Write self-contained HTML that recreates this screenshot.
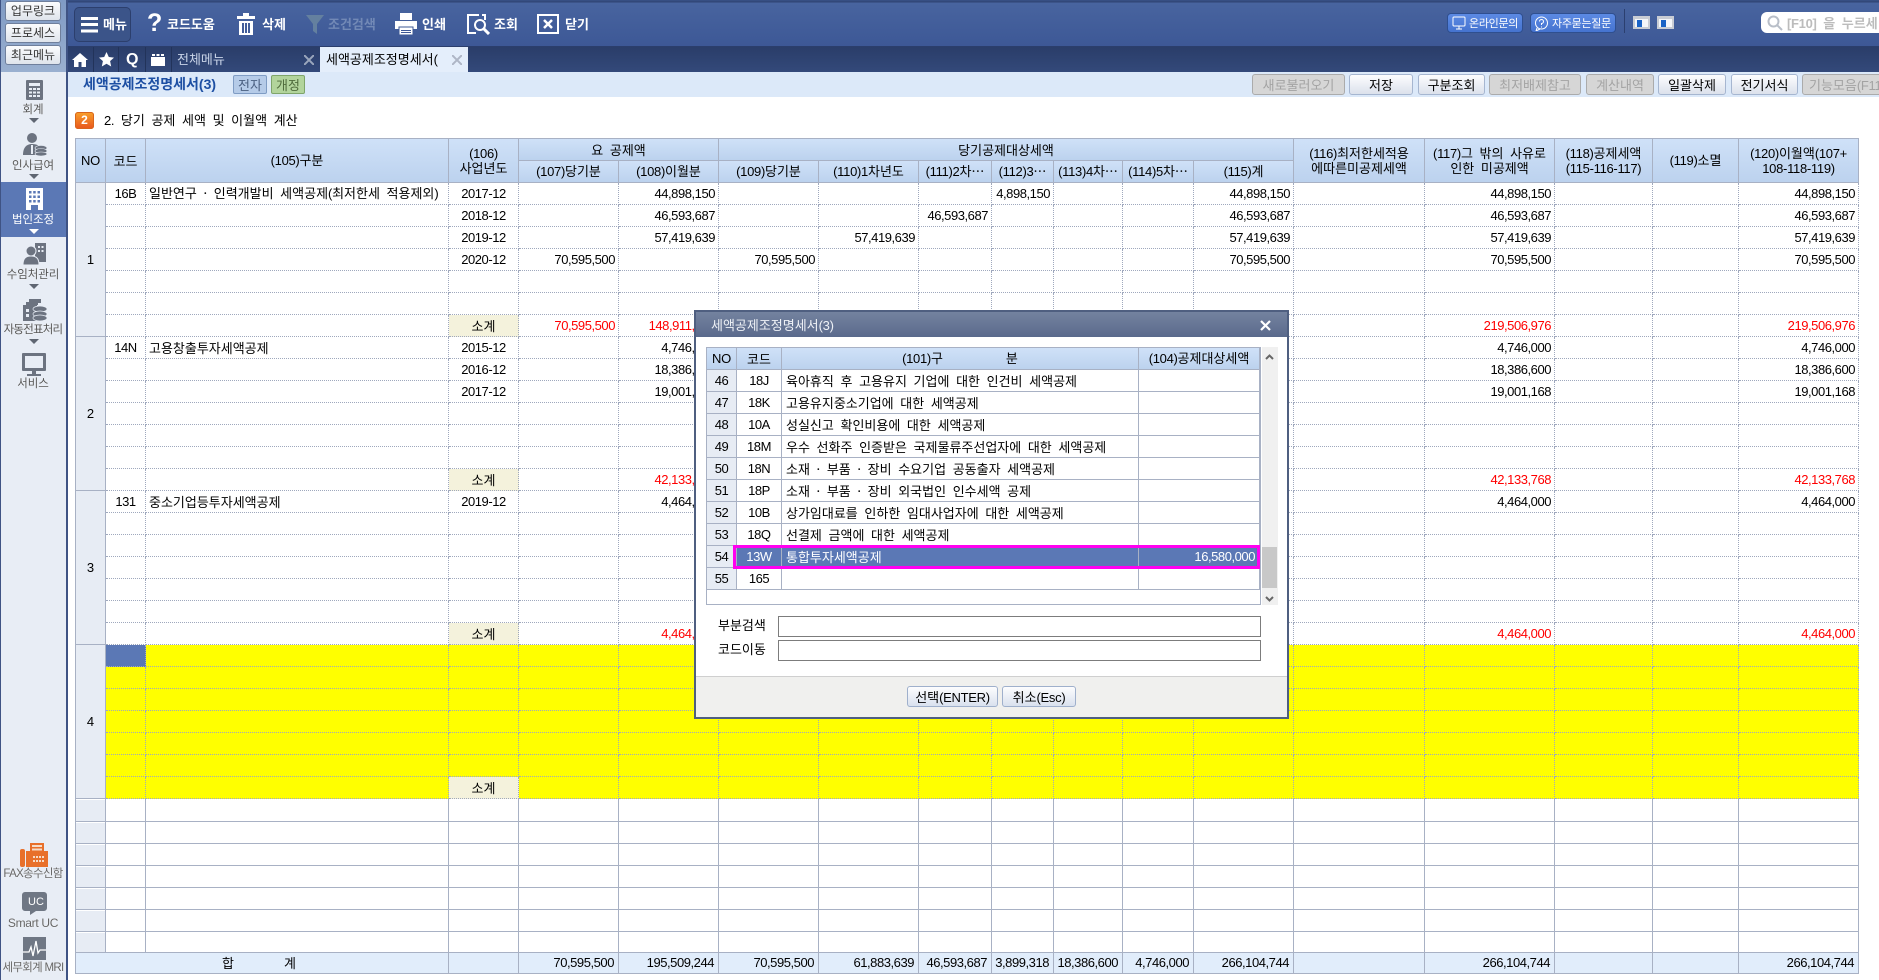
<!DOCTYPE html>
<html lang="ko"><head><meta charset="utf-8"><title>세액공제조정명세서(3)</title>
<style>
html,body{margin:0;padding:0;background:#fff}
body{position:relative;width:1879px;height:980px;overflow:hidden;font:13px/16px "Noto Sans CJK KR","NanumGothic",sans-serif;color:#000;word-spacing:3px}
.a{position:absolute;white-space:nowrap}
svg{position:absolute;display:block}
u{font-family:"Liberation Sans",sans-serif;letter-spacing:-.3px;text-decoration:none;word-spacing:0}
.tb{color:#fff;font-weight:700;top:16px}
.top{left:5px;width:56px;height:20px;box-sizing:border-box;text-align:center;line-height:18px;font-size:12px;background:linear-gradient(#fbfcfe,#dfe4ec);border:1px solid #6f7f9c;border-radius:3px;color:#333}
.sl{left:0;width:66px;text-align:center;font-size:11.500px;color:#555;letter-spacing:-.1px;line-height:14px;text-shadow:0 0 1px #fff}
.ar{width:0;height:0;border-left:5px solid transparent;border-right:5px solid transparent;border-top:5px solid #5f6672;left:29px}
.bt{top:74px;height:21px;box-sizing:border-box;text-align:center;line-height:19px;background:linear-gradient(#fdfdfe,#dbe1ec);border:1px solid #a6b6d0;border-radius:3px}
.off{background:#d6d6d6;border-color:#ababab;color:#a3a3a3}
table{border-collapse:separate;border-spacing:0;table-layout:fixed;position:absolute}
td,th{padding:0;box-sizing:border-box;overflow:hidden;white-space:nowrap;font-weight:400}
#g{left:75px;top:138px;width:1784px}
#g td{border:solid #9fa8bd;border-width:0 1px 1px 0;border-style:none dotted dotted none;line-height:20px;text-align:center}
#g th,#m th{border-right:1px solid #a8b1c4;border-bottom:1px solid #a8b1c4;background:linear-gradient(#cfe1f8,#bcd2ee);line-height:14px}
#g tr.h1 th{border-top:1px solid #a8b1c4}
#g th:first-child{border-left:1px solid #a8b1c4}
#g tr.h2 th:first-child{border-left:0}
#g tr{height:22px}
#g td.r{text-align:right;padding-right:3px;font:13px/20px "Liberation Sans",sans-serif;letter-spacing:-.45px;word-spacing:0}
#g td.c{font:13px/20px "Liberation Sans",sans-serif;letter-spacing:-.45px;word-spacing:0}
#g td.l{text-align:left;padding-left:3px}
#g td.no{background:#e7ecf4;border:solid #a8b1c4;border-width:0 1px 1px 1px;font:13px/20px "Liberation Sans",sans-serif}
#g td.x{color:#f00}
#g td.sub{background:#f4f2dc}
#g .y td{background:#ff0}
#g .y td.sub{background:#f4f2dc}
#g .y td.sel{background:#5b78b5}
#g .s td{border-style:none solid solid none;border-color:#a8b1c4}
#g .s td.no{border-style:solid;border-width:0 1px 1px 1px;box-shadow:inset 0 1px #fff}
#g .t td{background:#e1edfb;border-style:none solid solid none;border-color:#a8b1c4}
#g .t td:first-child{border-left:1px solid #a8b1c4}
#g .t td.r{padding-right:4px}
#d{left:694px;top:310px;width:595px;height:409px;box-sizing:border-box;border:2px solid #4f5f80;background:#fff;z-index:5}
#m{left:706px;top:347px;width:554px;z-index:6}
#m th{border-top:1px solid #a8b1c4}
#m th:first-child{border-left:1px solid #a8b1c4}
#m tr{height:22px}
#m td{border-right:1px solid #a8b1c4;border-bottom:1px solid #a8b1c4;line-height:20px;text-align:center}
#m td:first-child{background:#e7ecf4;border-left:1px solid #a8b1c4}
#m td.c,#m td:first-child{font:13px/20px "Liberation Sans",sans-serif;letter-spacing:-.45px}
#m td.l{text-align:left;padding-left:4px}
#m .se td{background:#5b78b5;color:#fff}
#m .se td:first-child{background:#e7ecf4;color:#000}
#m td.r{text-align:right;padding-right:4px;font:13px/20px "Liberation Sans",sans-serif;letter-spacing:-.45px}
.dbt{top:686px;height:21px;box-sizing:border-box;text-align:center;line-height:19px;background:linear-gradient(#fdfdfe,#d9e1ee);border:1px solid #9fb0cc;border-radius:3px;z-index:7}
.inp{left:778px;width:483px;height:21px;box-sizing:border-box;border:1px solid #7c7c7c;background:#fff;z-index:7}
.gap{display:inline-block}
</style></head><body>

<div class="a" style="left:0;top:0;width:1879px;height:47px;background:linear-gradient(#3a5288 0,#2f4474 2px,#48649f 3px,#3d5896 100%);border-bottom:1px solid #2b3e6c;box-sizing:border-box"></div>
<div class="a" style="left:0;top:47px;width:1879px;height:25px;background:linear-gradient(#2a3d69,#33497a)"></div>

<div class="a" style="left:74px;top:7px;width:57px;height:35px;box-sizing:border-box;background:#3b5489;border:1px solid #2c3f6d;border-radius:5px"></div>
<svg style="left:81px;top:17px" width="17" height="16"><rect width="17" height="3" fill="#fff"/><rect y="6" width="17" height="3" fill="#fff"/><rect y="12.500" width="17" height="3" fill="#fff"/></svg>
<span class="a tb" style="left:103px">메뉴</span>
<span class="a" style="left:147px;top:8px;color:#fff;font:700 25px/30px 'Liberation Sans',sans-serif">?</span>
<span class="a tb" style="left:167px">코드도움</span>
<svg style="left:237px;top:13px" width="18" height="22" fill="#fff"><rect x="6" y="0" width="6" height="3"/><rect x="0" y="3" width="18" height="3"/><path d="M2 8h14v14H2zM5 10v10h2V10zM8 10v10h2V10zM11 10v10h2V10z" fill-rule="evenodd"/></svg>
<span class="a tb" style="left:262px">삭제</span>
<svg style="left:306px;top:15px" width="18" height="19"><path d="M0 0h18L11 9v10l-4-3V9z" fill="#64809f"/></svg>
<span class="a tb" style="left:328px;color:#7289b6">조건검색</span>
<svg style="left:395px;top:13px" width="22" height="22" fill="#fff"><rect x="5" y="0" width="12" height="7"/><rect x="0" y="8" width="22" height="8"/><rect x="4" y="14" width="14" height="8" stroke="#3d5896"/><rect x="6" y="17" width="10" height="1" fill="#3d5896"/><rect x="6" y="19" width="10" height="1" fill="#3d5896"/></svg>
<span class="a tb" style="left:422px">인쇄</span>
<svg style="left:467px;top:14px" width="23" height="21" fill="none" stroke="#fff" stroke-width="2"><path d="M12 1H1v18h8"/><path d="M15 1h3v5" /><circle cx="13" cy="11" r="5"/><path d="M17 15l5 5" stroke-width="3"/></svg>
<span class="a tb" style="left:494px">조회</span>
<svg style="left:537px;top:14px" width="22" height="20" fill="none" stroke="#fff" stroke-width="2"><rect x="1" y="1" width="20" height="18"/><path d="M7 6l8 8M15 6l-8 8" stroke-width="2.500"/></svg>
<span class="a tb" style="left:565px">닫기</span>

<div class="a" style="left:1447px;top:13px;width:76px;height:20px;box-sizing:border-box;background:linear-gradient(#5c8ae4,#4573cf);border:1px solid #2f4f8f;border-radius:4px;color:#fff;font-size:11px;line-height:18px;padding-left:21px;letter-spacing:-.3px">온라인문의</div>
<svg style="left:1452px;top:16px" width="14" height="14" fill="none" stroke="#fff"><rect x="1" y="1" width="12" height="9" rx="1"/><path d="M4 13h6M7 10v3"/></svg>
<div class="a" style="left:1530px;top:13px;width:86px;height:20px;box-sizing:border-box;background:linear-gradient(#5c8ae4,#4573cf);border:1px solid #2f4f8f;border-radius:4px;color:#fff;font-size:11px;line-height:18px;padding-left:21px;letter-spacing:-.3px">자주묻는질문</div>
<svg style="left:1534px;top:16px" width="15" height="15" fill="none" stroke="#fff"><circle cx="7.500" cy="7" r="6"/><path d="M3 12l-1 3 4-2"/><path d="M5.500 5.500a2 2 0 1 1 2 2v1.500M7.500 10.500v1"/></svg>
<div class="a" style="left:1624px;top:9px;width:1px;height:24px;background:#2b3f6f"></div>
<svg style="left:1633px;top:16px" width="17" height="13"><rect width="17" height="13" fill="#c8ccd4"/><rect x="2" y="3" width="13" height="8" fill="#f4f6fa"/><rect x="4" y="4" width="5" height="7" fill="#1a63c6"/></svg>
<svg style="left:1657px;top:16px" width="17" height="13"><rect width="17" height="13" fill="#c8ccd4"/><rect x="2" y="3" width="13" height="8" fill="#f4f6fa"/><rect x="4" y="4" width="5" height="7" fill="#1a63c6"/></svg>
<div class="a" style="left:1761px;top:12px;width:130px;height:21px;background:#fff;border-radius:6px"></div>
<svg style="left:1767px;top:15px" width="16" height="16" fill="none" stroke="#b8bec8" stroke-width="2"><circle cx="6.500" cy="6.500" r="5"/><path d="M10 10l5 5"/></svg>
<span class="a" style="left:1787px;top:15px;color:#bcbcbc;font-weight:700"><u>[F10]</u> 을 누르세</span>

<svg style="left:72px;top:53px" width="16" height="14" fill="#fff"><path d="M8 0l8 7h-2v7H9.500V9h-3v5H2V7H0z"/></svg>
<svg style="left:99px;top:52px" width="15" height="15" fill="#fff"><path d="M7.500 0l2.300 5 5.200.6-3.900 3.500 1.100 5.400-4.700-2.700-4.700 2.700 1.100-5.400L0 5.600 5.200 5z"/></svg>
<span class="a" style="left:126px;top:51px;color:#fff;font:700 16px/18px 'Liberation Sans',sans-serif">Q</span>
<svg style="left:151px;top:54px" width="14" height="12" fill="#fff"><rect y="3" width="14" height="9"/><rect x="1" width="3" height="2"/><rect x="5.500" width="3" height="2"/><rect x="10" width="3" height="2"/></svg>
<div class="a" style="left:93px;top:47px;width:1px;height:25px;background:#22335a"></div>
<div class="a" style="left:118px;top:47px;width:1px;height:25px;background:#22335a"></div>
<div class="a" style="left:145px;top:47px;width:1px;height:25px;background:#22335a"></div>
<div class="a" style="left:171px;top:47px;width:1px;height:25px;background:#22335a"></div>
<span class="a" style="left:177px;top:51px;color:#c9d4e8">전체메뉴</span>
<svg style="left:304px;top:55px" width="10" height="10" stroke="#9aa6bc" stroke-width="2"><path d="M0 0l10 10M10 0L0 10"/></svg>
<div class="a" style="left:320px;top:47px;width:148px;height:25px;background:#e4eefb"></div>
<span class="a" style="left:326px;top:51px;word-spacing:0">세액공제조정명세서<u>(</u></span>
<svg style="left:452px;top:55px" width="10" height="10" stroke="#aeb6c6" stroke-width="2"><path d="M0 0l10 10M10 0L0 10"/></svg>

<div class="a" style="left:68px;top:72px;width:1811px;height:25px;background:#dce9f9"></div>
<span class="a" style="left:83px;top:76px;color:#1d4fa3;font-weight:700;font-size:14px">세액공제조정명세서<u style="letter-spacing:0">(3)</u></span>
<div class="a" style="left:233px;top:75px;width:34px;height:19px;box-sizing:border-box;background:#b5cbe8;border:1px solid #7f9cc4;text-align:center;line-height:17px;color:#4a5f80;border-radius:2px">전자</div>
<div class="a" style="left:271px;top:75px;width:34px;height:19px;box-sizing:border-box;background:#b2d49c;border:1px solid #7fa56a;text-align:center;line-height:17px;color:#4f6b3c;border-radius:2px">개정</div>
<div class="a bt off" style="left:1252px;width:93px">새로불러오기</div>
<div class="a bt" style="left:1349px;width:64px">저장</div>
<div class="a bt" style="left:1418px;width:67px">구분조회</div>
<div class="a bt off" style="left:1489px;width:92px">최저배제참고</div>
<div class="a bt off" style="left:1586px;width:68px">계산내역</div>
<div class="a bt" style="left:1658px;width:68px">일괄삭제</div>
<div class="a bt" style="left:1731px;width:67px">전기서식</div>
<div class="a bt off" style="left:1802px;width:90px;text-align:left;padding-left:6px">기능모음<u>(F11)</u></div>

<div class="a" style="left:0;top:0;width:68px;height:980px;box-sizing:border-box;background:#e8edf5;border-left:1px solid #3f5384;border-right:2px solid #3f5384"></div>
<div class="a" style="left:1px;top:0;width:65px;height:72px;background:linear-gradient(#7f9ac4,#9ab0d0)"></div>
<div class="a top" style="top:1px">업무링크</div>
<div class="a top" style="top:23px">프로세스</div>
<div class="a top" style="top:45px">최근메뉴</div>

<svg style="left:26px;top:80px" width="17" height="20"><rect width="17" height="20" rx="1" fill="#6c7380"/><rect x="3" y="3" width="11" height="3" fill="#e8edf5"/><path d="M3 8h3v2H3zM7 8h3v2H7zM11 8h3v2h-3zM3 11.500h3v2H3zM7 11.500h3v2H7zM11 11.500h3v2h-3zM3 15h3v2H3zM7 15h3v2H7zM11 15h3v2h-3z" fill="#e8edf5"/></svg>
<span class="a sl" style="top:102px">회계</span><div class="a ar" style="top:118px"></div>
<svg style="left:23px;top:133px" width="24" height="23" fill="#6c7380"><circle cx="9" cy="5" r="5"/><path d="M0 22c0-8 4-11 9-11s8 2 9 5v6z"/><ellipse cx="18" cy="15" rx="6" ry="2.500" stroke="#e8edf5" stroke-width=".6"/><ellipse cx="18" cy="18" rx="6" ry="2.500" stroke="#e8edf5" stroke-width=".6"/><ellipse cx="18" cy="21" rx="6" ry="2" stroke="#e8edf5" stroke-width=".6"/><rect x="8" y="12" width="2" height="9" fill="#e8edf5"/></svg>
<span class="a sl" style="top:158px">인사급여</span><div class="a ar" style="top:174px"></div>
<div class="a" style="left:1px;top:182px;width:65px;height:55px;background:#5b78b5"></div>
<svg style="left:26px;top:188px" width="17" height="22"><path d="M0 0h17v22h-5v-5H5v5H0z" fill="#fff"/><path d="M3 3h2.500v2.500H3zM7.200 3h2.500v2.500H7.200zM11.500 3H14v2.500h-2.500zM3 7.500h2.500V10H3zM7.200 7.500h2.500V10H7.200zM11.500 7.500H14V10h-2.500zM3 12h2.500v2.500H3zM7.200 12h2.500v2.500H7.200zM11.500 12H14v2.500h-2.500z" fill="#5b78b5"/></svg>
<span class="a sl" style="top:212px;color:#fff;text-shadow:none">법인조정</span><div class="a ar" style="top:229px;border-top-color:#fff"></div>
<svg style="left:23px;top:243px" width="23" height="22" fill="#6c7380"><rect x="12" y="0" width="11" height="19"/><path d="M15 3h2v2h-2zM18.500 3h2v2h-2zM15 7h2v2h-2zM18.500 7h2v2h-2z" fill="#e8edf5"/><circle cx="8" cy="8" r="5" stroke="#e8edf5"/><path d="M0 22c0-7 3-9 8-9s8 2 8 9z" stroke="#e8edf5"/></svg>
<span class="a sl" style="top:267px">수임처관리</span><div class="a ar" style="top:284px"></div>
<svg style="left:23px;top:299px" width="24" height="22" fill="#6c7380"><path d="M6 0h12v4H6zM3 3h12v3H3z"/><rect x="0" y="6" width="14" height="16"/><path d="M3 10h3v3H3zM3 15h3v3H3z" fill="#e8edf5"/><ellipse cx="17" cy="10" rx="7" ry="3" stroke="#e8edf5" stroke-width=".7"/><ellipse cx="17" cy="15" rx="7" ry="3" stroke="#e8edf5" stroke-width=".7"/><ellipse cx="17" cy="19" rx="7" ry="3" stroke="#e8edf5" stroke-width=".7"/></svg>
<span class="a sl" style="top:322px;letter-spacing:-.8px">자동전표처리</span><div class="a ar" style="top:339px"></div>
<svg style="left:22px;top:353px" width="24" height="23" fill="#6c7380"><path fill-rule="evenodd" d="M1 0h22a1 1 0 0 1 1 1v16a1 1 0 0 1-1 1H1a1 1 0 0 1-1-1V1a1 1 0 0 1 1-1zM3 3v12h18V3z"/><rect x="10" y="18" width="4" height="3"/><rect x="5" y="21" width="14" height="2"/></svg>
<span class="a sl" style="top:376px">서비스</span>

<svg style="left:20px;top:843px" width="28" height="24" fill="#e8702a"><rect x="0" y="6" width="5" height="18" rx="2"/><path d="M6 8h4V0h14v8h4v16H6z"/><path d="M12 2h10v2H12zM12 5.500h10v2H12z" fill="#f6dcc8"/><path d="M13 13h2v2h-2zM16 13h2v2h-2zM19 13h2v2h-2zM22 13h2v2h-2zM13 17h2v2h-2zM16 17h2v2h-2zM19 17h2v2h-2zM22 17h2v2h-2z" fill="#f6dcc8"/></svg>
<span class="a sl" style="top:867px;color:#666;font-family:'Liberation Sans','Noto Sans CJK KR',sans-serif;letter-spacing:-.7px;word-spacing:0">FAX송수신함</span>
<svg style="left:22px;top:892px" width="25" height="23"><path d="M3 0h19a3 3 0 0 1 3 3v13a3 3 0 0 1-3 3h-8l-6 4v-4H3a3 3 0 0 1-3-3V3a3 3 0 0 1 3-3z" fill="#6f7784"/></svg>
<span class="a" style="left:28px;top:895px;color:#fff;font:11px/14px 'Liberation Sans',sans-serif;word-spacing:0">UC</span>
<span class="a sl" style="top:916px;color:#666;font-family:'Liberation Sans',sans-serif;font-size:12px;word-spacing:0;letter-spacing:-.3px">Smart UC</span>
<svg style="left:23px;top:937px" width="23" height="23"><rect width="23" height="23" fill="#6f7784"/><path d="M0 15h6l2-5 2 9 3-15 2 12 2-3h6" fill="none" stroke="#fff" stroke-width="1.300"/></svg>
<span class="a sl" style="top:961px;color:#666;font-family:'Liberation Sans','Noto Sans CJK KR',sans-serif;letter-spacing:-.7px;word-spacing:0">세무회계 MRI</span>

<div class="a" style="left:75px;top:112px;width:19px;height:17px;border-radius:3px;background:linear-gradient(#f9a12a,#e8551e);border:0;color:#fff;font:700 12px/17px 'Liberation Sans',sans-serif;text-align:center;box-shadow:inset 0 0 0 1px #d9651c">2</div>
<span class="a" style="left:104px;top:112px"><u>2.</u> 당기 공제 세액 및 이월액 계산</span>

<table id="g">
<colgroup><col style="width:31px"><col style="width:40px"><col style="width:303px"><col style="width:70px"><col style="width:100px"><col style="width:100px"><col style="width:100px"><col style="width:100px"><col style="width:73px"><col style="width:62px"><col style="width:69px"><col style="width:71px"><col style="width:100px"><col style="width:131px"><col style="width:130px"><col style="width:98px"><col style="width:86px"><col style="width:120px"></colgroup>
<tr class="h1" style="height:23px"><th rowspan="2"><u>NO</u></th><th rowspan="2">코드</th><th rowspan="2"><u>(105)</u>구분</th><th rowspan="2"><u>(106)</u><br>사업년도</th><th colspan="2">요 공제액</th><th colspan="7">당기공제대상세액</th><th rowspan="2"><u>(116)</u>최저한세적용<br>에따른미공제세액</th><th rowspan="2"><u>(117)</u>그 밖의 사유로<br>인한 미공제액</th><th rowspan="2"><u>(118)</u>공제세액<br><u>(115-116-117)</u></th><th rowspan="2"><u>(119)</u>소멸</th><th rowspan="2"><u>(120)</u>이월액<u>(107+</u><br><u>108-118-119)</u></th></tr>
<tr class="h2"><th><u>(107)</u>당기분</th><th><u>(108)</u>이월분</th><th><u>(109)</u>당기분</th><th><u>(110)1</u>차년도</th><th><u>(111)2</u>차…</th><th><u>(112)3</u>…</th><th><u>(113)4</u>차…</th><th><u>(114)5</u>차…</th><th><u>(115)</u>계</th></tr>

<tr><td class="no" rowspan="7">1</td><td class="c">16B</td><td class="l">일반연구 · 인력개발비 세액공제<u>(</u>최저한세 적용제외<u>)</u></td><td class="c">2017-12</td><td></td><td class="r">44,898,150</td><td></td><td></td><td></td><td class="r">4,898,150</td><td></td><td></td><td class="r">44,898,150</td><td></td><td class="r">44,898,150</td><td></td><td></td><td class="r">44,898,150</td></tr>
<tr><td></td><td></td><td class="c">2018-12</td><td></td><td class="r">46,593,687</td><td></td><td></td><td class="r">46,593,687</td><td></td><td></td><td></td><td class="r">46,593,687</td><td></td><td class="r">46,593,687</td><td></td><td></td><td class="r">46,593,687</td></tr>
<tr><td></td><td></td><td class="c">2019-12</td><td></td><td class="r">57,419,639</td><td></td><td class="r">57,419,639</td><td></td><td></td><td></td><td></td><td class="r">57,419,639</td><td></td><td class="r">57,419,639</td><td></td><td></td><td class="r">57,419,639</td></tr>
<tr><td></td><td></td><td class="c">2020-12</td><td class="r">70,595,500</td><td></td><td class="r">70,595,500</td><td></td><td></td><td></td><td></td><td></td><td class="r">70,595,500</td><td></td><td class="r">70,595,500</td><td></td><td></td><td class="r">70,595,500</td></tr>
<tr><td></td><td></td><td></td><td></td><td></td><td></td><td></td><td></td><td></td><td></td><td></td><td></td><td></td><td></td><td></td><td></td><td></td></tr>
<tr><td></td><td></td><td></td><td></td><td></td><td></td><td></td><td></td><td></td><td></td><td></td><td></td><td></td><td></td><td></td><td></td><td></td></tr>
<tr><td></td><td></td><td class="sub">소계</td><td class="r x">70,595,500</td><td class="r x">148,911,476</td><td></td><td></td><td></td><td></td><td></td><td></td><td></td><td></td><td class="r x">219,506,976</td><td></td><td></td><td class="r x">219,506,976</td></tr>

<tr><td class="no" rowspan="7">2</td><td class="c">14N</td><td class="l">고용창출투자세액공제</td><td class="c">2015-12</td><td></td><td class="r">4,746,000</td><td></td><td></td><td></td><td></td><td></td><td></td><td></td><td></td><td class="r">4,746,000</td><td></td><td></td><td class="r">4,746,000</td></tr>
<tr><td></td><td></td><td class="c">2016-12</td><td></td><td class="r">18,386,600</td><td></td><td></td><td></td><td></td><td></td><td></td><td></td><td></td><td class="r">18,386,600</td><td></td><td></td><td class="r">18,386,600</td></tr>
<tr><td></td><td></td><td class="c">2017-12</td><td></td><td class="r">19,001,168</td><td></td><td></td><td></td><td></td><td></td><td></td><td></td><td></td><td class="r">19,001,168</td><td></td><td></td><td class="r">19,001,168</td></tr>
<tr><td></td><td></td><td></td><td></td><td></td><td></td><td></td><td></td><td></td><td></td><td></td><td></td><td></td><td></td><td></td><td></td><td></td></tr>
<tr><td></td><td></td><td></td><td></td><td></td><td></td><td></td><td></td><td></td><td></td><td></td><td></td><td></td><td></td><td></td><td></td><td></td></tr>
<tr><td></td><td></td><td></td><td></td><td></td><td></td><td></td><td></td><td></td><td></td><td></td><td></td><td></td><td></td><td></td><td></td><td></td></tr>
<tr><td></td><td></td><td class="sub">소계</td><td></td><td class="r x">42,133,768</td><td></td><td></td><td></td><td></td><td></td><td></td><td></td><td></td><td class="r x">42,133,768</td><td></td><td></td><td class="r x">42,133,768</td></tr>

<tr><td class="no" rowspan="7">3</td><td class="c">131</td><td class="l">중소기업등투자세액공제</td><td class="c">2019-12</td><td></td><td class="r">4,464,000</td><td></td><td></td><td></td><td></td><td></td><td></td><td></td><td></td><td class="r">4,464,000</td><td></td><td></td><td class="r">4,464,000</td></tr>
<tr><td></td><td></td><td></td><td></td><td></td><td></td><td></td><td></td><td></td><td></td><td></td><td></td><td></td><td></td><td></td><td></td><td></td></tr>
<tr><td></td><td></td><td></td><td></td><td></td><td></td><td></td><td></td><td></td><td></td><td></td><td></td><td></td><td></td><td></td><td></td><td></td></tr>
<tr><td></td><td></td><td></td><td></td><td></td><td></td><td></td><td></td><td></td><td></td><td></td><td></td><td></td><td></td><td></td><td></td><td></td></tr>
<tr><td></td><td></td><td></td><td></td><td></td><td></td><td></td><td></td><td></td><td></td><td></td><td></td><td></td><td></td><td></td><td></td><td></td></tr>
<tr><td></td><td></td><td></td><td></td><td></td><td></td><td></td><td></td><td></td><td></td><td></td><td></td><td></td><td></td><td></td><td></td><td></td></tr>
<tr><td></td><td></td><td class="sub">소계</td><td></td><td class="r x">4,464,000</td><td></td><td></td><td></td><td></td><td></td><td></td><td></td><td></td><td class="r x">4,464,000</td><td></td><td></td><td class="r x">4,464,000</td></tr>

<tr class="y"><td class="no" rowspan="7" style="background:#e7ecf4">4</td><td class="sel"></td><td></td><td></td><td></td><td></td><td></td><td></td><td></td><td></td><td></td><td></td><td></td><td></td><td></td><td></td><td></td><td></td></tr>
<tr class="y"><td></td><td></td><td></td><td></td><td></td><td></td><td></td><td></td><td></td><td></td><td></td><td></td><td></td><td></td><td></td><td></td><td></td></tr>
<tr class="y"><td></td><td></td><td></td><td></td><td></td><td></td><td></td><td></td><td></td><td></td><td></td><td></td><td></td><td></td><td></td><td></td><td></td></tr>
<tr class="y"><td></td><td></td><td></td><td></td><td></td><td></td><td></td><td></td><td></td><td></td><td></td><td></td><td></td><td></td><td></td><td></td><td></td></tr>
<tr class="y"><td></td><td></td><td></td><td></td><td></td><td></td><td></td><td></td><td></td><td></td><td></td><td></td><td></td><td></td><td></td><td></td><td></td></tr>
<tr class="y"><td></td><td></td><td></td><td></td><td></td><td></td><td></td><td></td><td></td><td></td><td></td><td></td><td></td><td></td><td></td><td></td><td></td></tr>
<tr class="y"><td></td><td></td><td class="sub">소계</td><td></td><td></td><td></td><td></td><td></td><td></td><td></td><td></td><td></td><td></td><td></td><td></td><td></td><td></td></tr>

<tr class="s" style="height:23px"><td class="no"></td><td></td><td></td><td></td><td></td><td></td><td></td><td></td><td></td><td></td><td></td><td></td><td></td><td></td><td></td><td></td><td></td><td></td></tr>
<tr class="s"><td class="no"></td><td></td><td></td><td></td><td></td><td></td><td></td><td></td><td></td><td></td><td></td><td></td><td></td><td></td><td></td><td></td><td></td><td></td></tr>
<tr class="s"><td class="no"></td><td></td><td></td><td></td><td></td><td></td><td></td><td></td><td></td><td></td><td></td><td></td><td></td><td></td><td></td><td></td><td></td><td></td></tr>
<tr class="s"><td class="no"></td><td></td><td></td><td></td><td></td><td></td><td></td><td></td><td></td><td></td><td></td><td></td><td></td><td></td><td></td><td></td><td></td><td></td></tr>
<tr class="s"><td class="no"></td><td></td><td></td><td></td><td></td><td></td><td></td><td></td><td></td><td></td><td></td><td></td><td></td><td></td><td></td><td></td><td></td><td></td></tr>
<tr class="s"><td class="no"></td><td></td><td></td><td></td><td></td><td></td><td></td><td></td><td></td><td></td><td></td><td></td><td></td><td></td><td></td><td></td><td></td><td></td></tr>
<tr class="s" style="height:21px"><td class="no"></td><td></td><td></td><td></td><td></td><td></td><td></td><td></td><td></td><td></td><td></td><td></td><td></td><td></td><td></td><td></td><td></td><td></td></tr>
<tr class="t" style="height:21px"><td colspan="3" style="word-spacing:0;padding-right:6px">합<span class="gap" style="width:50px"></span>계</td><td></td><td class="r">70,595,500</td><td class="r">195,509,244</td><td class="r">70,595,500</td><td class="r">61,883,639</td><td class="r">46,593,687</td><td class="r">3,899,318</td><td class="r">18,386,600</td><td class="r">4,746,000</td><td class="r">266,104,744</td><td></td><td class="r">266,104,744</td><td></td><td></td><td class="r">266,104,744</td></tr>
</table>

<div class="a" id="d">
  <div class="a" style="left:0;top:0;width:591px;height:25px;background:linear-gradient(#74839f,#5a6a8c)"></div>
  <span class="a" style="left:15px;top:5px;color:#eef1f6;word-spacing:0">세액공제조정명세서<u>(3)</u></span>
  <svg style="left:564px;top:8px" width="11" height="11" stroke="#fff" stroke-width="2.200"><path d="M1 1l9 9M10 1l-9 9"/></svg>
  <div class="a" style="left:0;top:364px;width:591px;height:41px;background:#f0f0ee;border-top:1px solid #cfcfcf;box-sizing:border-box"></div>
  <div class="a" style="left:10px;top:35px;width:555px;height:258px;box-sizing:border-box;border:1px solid #a8b1c4"></div>
  <div class="a" style="left:566px;top:35px;width:16px;height:258px;background:#f0f0f0"></div>
  <div class="a" style="left:566px;top:235px;width:15px;height:41px;background:#c8c8c8"></div>
  <svg style="left:569px;top:42px" width="9" height="6" fill="none" stroke="#666" stroke-width="2"><path d="M1 5l3.500-3.500L8 5"/></svg>
  <svg style="left:569px;top:284px" width="9" height="6" fill="none" stroke="#666" stroke-width="2"><path d="M1 1l3.500 3.500L8 1"/></svg>
  <span class="a" style="left:22px;top:305px;word-spacing:0">부분검색</span>
  <span class="a" style="left:22px;top:329px;word-spacing:0">코드이동</span>
</div>

<table id="m" class="a">
<colgroup><col style="width:31px"><col style="width:45px"><col style="width:357px"><col style="width:121px"></colgroup>
<tr style="height:23px"><th><u>NO</u></th><th>코드</th><th><u>(101)</u>구<span class="gap" style="width:63px"></span>분</th><th><u>(104)</u>공제대상세액</th></tr>
<tr><td>46</td><td class="c">18J</td><td class="l">육아휴직 후 고용유지 기업에 대한 인건비 세액공제</td><td></td></tr>
<tr><td>47</td><td class="c">18K</td><td class="l">고용유지중소기업에 대한 세액공제</td><td></td></tr>
<tr><td>48</td><td class="c">10A</td><td class="l">성실신고 확인비용에 대한 세액공제</td><td></td></tr>
<tr><td>49</td><td class="c">18M</td><td class="l">우수 선화주 인증받은 국제물류주선업자에 대한 세액공제</td><td></td></tr>
<tr><td>50</td><td class="c">18N</td><td class="l">소재 · 부품 · 장비 수요기업 공동출자 세액공제</td><td></td></tr>
<tr><td>51</td><td class="c">18P</td><td class="l">소재 · 부품 · 장비 외국법인 인수세액 공제</td><td></td></tr>
<tr><td>52</td><td class="c">10B</td><td class="l">상가임대료를 인하한 임대사업자에 대한 세액공제</td><td></td></tr>
<tr><td>53</td><td class="c">18Q</td><td class="l">선결제 금액에 대한 세액공제</td><td></td></tr>
<tr class="se"><td>54</td><td class="c">13W</td><td class="l">통합투자세액공제</td><td class="r">16,580,000</td></tr>
<tr><td>55</td><td class="c">165</td><td class="l"></td><td></td></tr>
</table>
<div class="a" style="left:733px;top:545px;width:527px;height:24px;box-sizing:border-box;border:3px solid #ff00f0;z-index:7"></div>

<div class="a inp" style="top:616px"></div>
<div class="a inp" style="top:640px"></div>
<div class="a dbt" style="left:907px;width:91px"><span style="word-spacing:0">선택<u>(ENTER)</u></span></div>
<div class="a dbt" style="left:1002px;width:74px"><span style="word-spacing:0">취소<u>(Esc)</u></span></div>
</body></html>
